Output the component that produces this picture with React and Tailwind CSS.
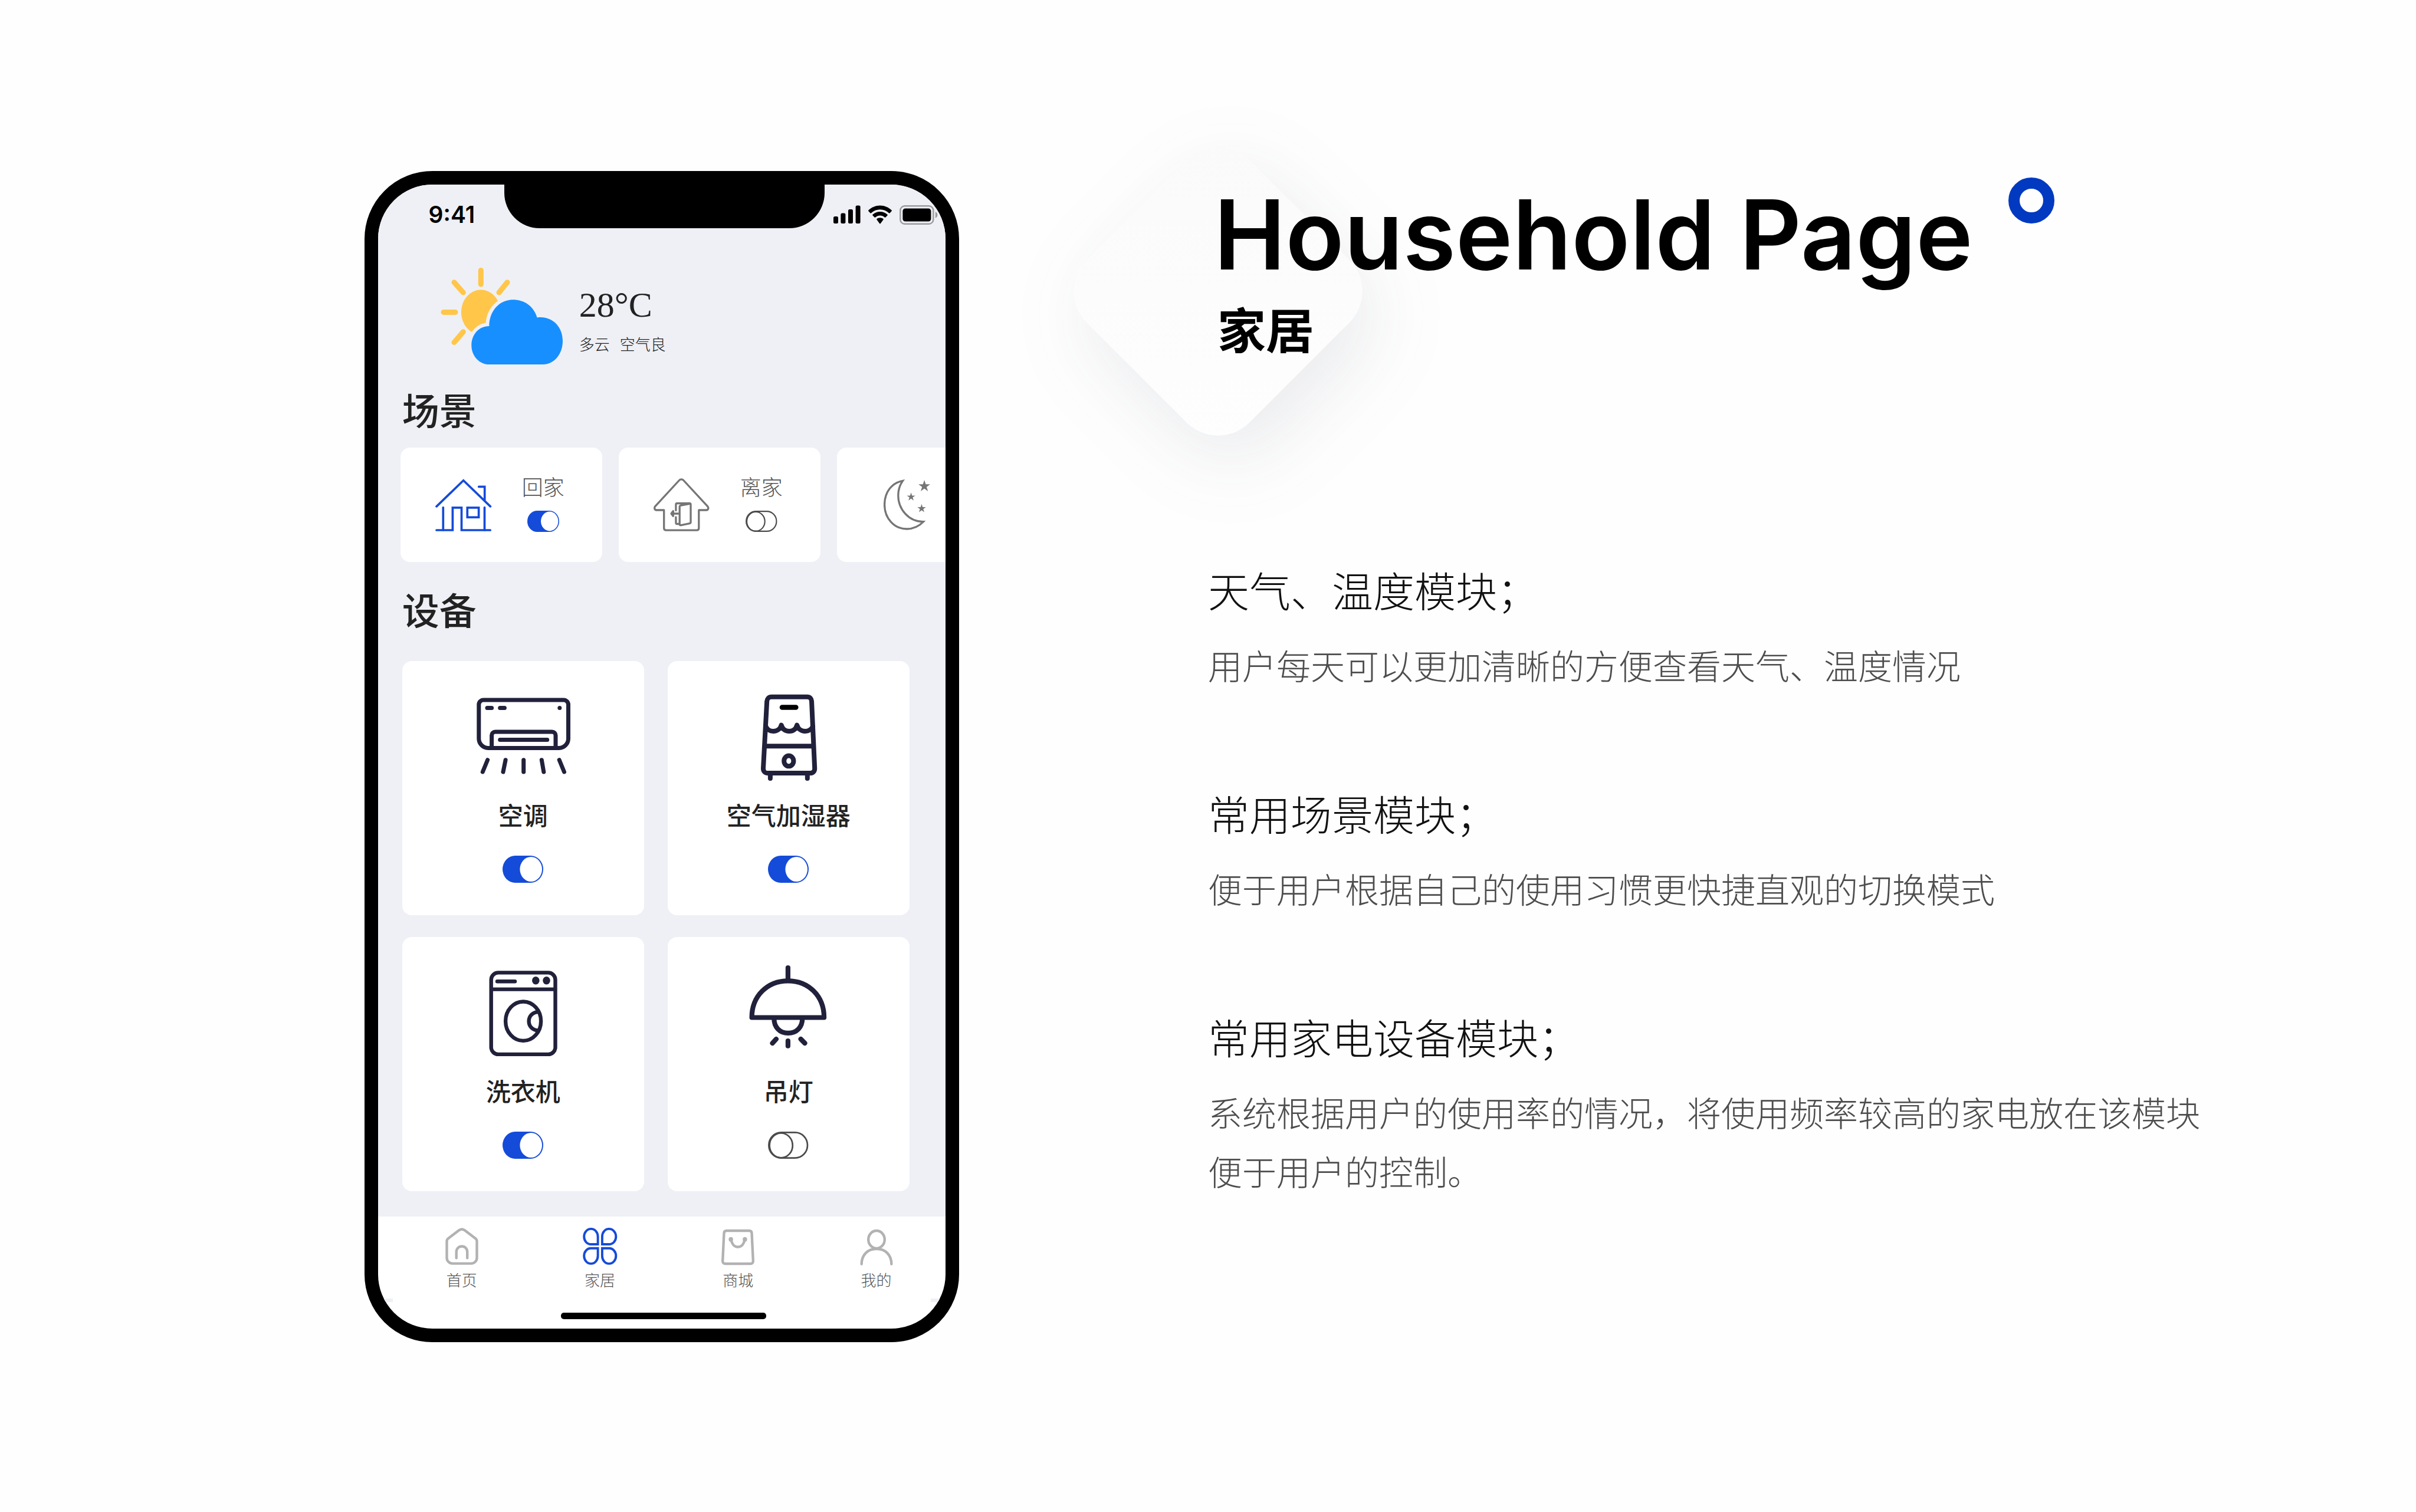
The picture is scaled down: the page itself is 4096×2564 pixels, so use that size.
import React, { useState } from "react";

const ink = "#21213b";

function Toggle({ label, initial, className }) {
  const [on, setOn] = useState(initial);
  return (
    <button
      type="button"
      role="switch"
      aria-checked={on}
      aria-label={label}
      onClick={() => setOn(!on)}
      className={className}
    >
      <svg viewBox="0 0 69 46" className="block h-full w-full" aria-hidden="true">
        {on ? (
          <>
            <rect width="69" height="46" rx="21.5" ry="23" fill="#154bd9" />
            <ellipse cx="48.2" cy="23" rx="18.8" ry="21" fill="#fff" />
          </>
        ) : (
          <g fill="none" stroke="#4b4b4b" strokeWidth="2.7">
            <rect x="1.4" y="1.4" width="65.6" height="43.2" rx="21" ry="21.6" />
            <ellipse cx="22.2" cy="23.4" rx="19.6" ry="20.9" />
          </g>
        )}
      </svg>
    </button>
  );
}

function SignalIcon() {
  return (
    <svg viewBox="0 0 46 32" className="h-[32px] w-[46px]" aria-hidden="true">
      <rect x="0" y="19" width="8" height="12" rx="2.5" />
      <rect x="12.4" y="13.5" width="8" height="17.500" rx="2.500" />
      <rect x="25" y="7" width="8" height="24" rx="2.5" />
      <rect x="37.6" y="0.4" width="8" height="30.6" rx="2.5" />
    </svg>
  );
}

function WifiIcon() {
  return (
    <svg viewBox="0 0 40 32" className="h-[32px] w-[40px]" aria-hidden="true">
      <path d="M20 .4C27.600.4 34.500 3.400 39.600 8.400 40.100 8.900 40.100 9.600 39.600 10.100L36.600 13.200C36.200 13.700 35.400 13.700 35 13.200 31 9.500 25.700 7.300 20 7.300S9 9.500 5 13.200C4.600 13.700 3.800 13.700 3.400 13.200L.4 10.100C-.1 9.600-.1 8.900.4 8.400 5.500 3.400 12.400.4 20 .4Z" />
      <path d="M20 10.900C24.800 10.900 29.100 12.700 32.400 15.700 32.900 16.200 32.900 16.900 32.400 17.400L29.400 20.400C28.900 20.900 28.200 20.900 27.700 20.500 25.700 18.700 23 17.600 20 17.600S14.300 18.700 12.300 20.500C11.800 20.900 11.100 20.900 10.600 20.400L7.600 17.400C7.100 16.900 7.100 16.200 7.600 15.700 10.900 12.700 15.200 10.900 20 10.900Z" />
      <path d="M20 21.200C22 21.200 23.900 21.900 25.400 23.100 25.900 23.600 25.900 24.300 25.400 24.800L20.800 31C20.400 31.500 19.600 31.500 19.200 31L14.600 24.800C14.100 24.300 14.100 23.600 14.600 23.100 16.100 21.900 18 21.200 20 21.200Z" />
    </svg>
  );
}

function BatteryIcon() {
  return (
    <svg viewBox="0 0 65 33" className="h-[33px] w-[65px]" aria-hidden="true">
      <rect x="1.3" y="1.3" width="56" height="30.400" rx="7.500" fill="none" stroke="#9a9b9e" strokeWidth="2.4" />
      <rect x="5.400" y="5.500" width="48" height="22" rx="4.500" />
      <path d="M60.800 11.200C63 12 64.400 14 64.400 16.500S63 21 60.800 21.800Z" fill="#9a9b9e" />
    </svg>
  );
}

function WeatherIcon() {
  return (
    <svg viewBox="0 0 207 164" className="h-[164px] w-[207px] shrink-0" aria-hidden="true">
      <g stroke="#ffc64a" strokeWidth="9" strokeLinecap="round" fill="#ffc64a">
        <ellipse cx="68.3" cy="75.400" rx="33.4" ry="38.1" stroke="none" />
        <path d="M68.3 4.500V28M5 75.400H25M23 24.700 38.300 42.100M113 24.700 99 42.100M38.300 108.700 23 126.600" />
      </g>
      <path
        d="M82.300 164C66 164 52.300 150 52.300 131.700C52.300 113 65 99 82.300 99C82.300 74 99 54.200 122.900 54.200C143 54.200 158 66 163.600 84.400C187 81 207 98 207 124C207 147 192 164 173.500 164Z"
        fill="#188fff"
        stroke="#eff0f5"
        strokeWidth="12"
        paintOrder="stroke"
      />
    </svg>
  );
}

function ArriveIcon() {
  return (
    <svg viewBox="0 0 96 89" className="h-[89px] w-[96px] shrink-0" fill="none" stroke="#154bd9" strokeWidth="3.700" strokeLinecap="round" aria-hidden="true">
      <path d="M2 46.800 47.700 2.700 93.400 46.800" />
      <path d="M73.700 13.300H83.700V36" />
      <path d="M13.300 48.500V87M83.500 48.500V87" />
      <path d="M2 87H29.400V48.900H44.500V87H93.200" />
      <rect x="54.300" y="48.900" width="19.300" height="16.300" />
    </svg>
  );
}

function LeaveIcon() {
  return (
    <svg viewBox="0 0 96 90" className="h-[90px] w-[96px] shrink-0" fill="none" stroke="#757575" strokeWidth="3.300" strokeLinecap="round" strokeLinejoin="round" aria-hidden="true">
      <path d="M43.500 3.500C45.500 1.200 48.800 1.200 50.800 3.500L91.600 47.600C94 50.500 92.500 54 89.500 54H76.800V84.500C76.800 86.800 75.300 88.200 73 88.200H21.500C19.200 88.200 17.700 86.800 17.700 84.500V54H5C1.900 54 .6 50.500 2.800 47.600Z" />
      <path d="M37.900 54.500V44.500Q37.900 42.500 39.900 42.500H61Q63 42.500 63 44.500V74.500Q63 76.300 61 76.700L46.500 79.600Q44.200 80 44.200 78V48.500Q44.200 46.500 46.200 46L61 43.400" />
      <path d="M37.900 66V75.500Q37.900 77.500 39.900 77.500H43" />
      <path d="M41.700 60H31M33.300 55.600 30 60 33.300 64.300Z" />
    </svg>
  );
}

const star = "0,-10 2.25,-3.09 9.51,-3.09 3.63,1.18 5.88,8.09 0,3.82 -5.88,8.09 -3.63,1.18 -9.51,-3.09 -2.25,-3.09";

function MoonIcon() {
  return (
    <svg viewBox="0 0 79 86" className="h-[86px] w-[79px] shrink-0" aria-hidden="true">
      <path
        d="M32.500 2.400C14.500 5.500 1.600 21 1.600 42.800C1.600 66 18 84 39.400 84C50.500 84 60 79.500 67.500 71.700C43 72 24.800 51 24.800 27C24.800 17 27.500 9.500 32.500 2.400Z"
        fill="none"
        stroke="#757575"
        strokeWidth="3.300"
      />
      <g fill="#757575">
        <polygon points={star} transform="translate(69.100 11.400) scale(1.050)" />
        <polygon points={star} transform="translate(46.600 29.700) scale(.750)" />
        <polygon points={star} transform="translate(64.500 49.300) scale(.760)" />
      </g>
    </svg>
  );
}

function DeviceCanvas({ width, children }) {
  return (
    <svg viewBox="0 0 160 156" className="h-[156px] w-[160px] shrink-0 overflow-visible" fill="none" stroke={ink} strokeWidth={width} strokeLinecap="round" strokeLinejoin="round" aria-hidden="true">
      {children}
    </svg>
  );
}

function AirConditionerIcon() {
  return (
    <DeviceCanvas width="7">
      <path d="M12.800 18H148.500A8 8 0 0 1 156.500 26V83.400A16 16 0 0 1 140.500 99.400H20.800A16 16 0 0 1 4.800 83.400V26A8 8 0 0 1 12.800 18Z" />
      <path d="M19 31.500H26.600M40.700 31.500H48.400M141.800 31.500V31.600" />
      <path d="M26.600 99V78A6 6 0 0 1 32.600 72H129A6 6 0 0 1 135 78V99M40.700 85.600H120.700" />
      <path d="M19.600 119.700 11.300 140M50.100 119.700 46 140M80.700 119.700V140M111.300 119.700 114.800 140M141.200 119.700 149.500 140" />
    </DeviceCanvas>
  );
}

function HumidifierIcon() {
  return (
    <DeviceCanvas width="8">
      <path d="M51 12.800H111.500C116 12.800 118.800 16 119 20L124.200 134C124.400 139 121 142 117 142H44.300C40 142 36.900 139 37 134L43.200 20C43.500 16 46.500 12.800 51 12.800Z" />
      <path d="M69 30.600H92.300" stroke="#000" strokeWidth="8.500" />
      <path d="M41.500 63C44 69 49 71 54 71C61 71 66 67 67.700 60.500C69.500 67 74 71 81 71C88 71 92.500 67 94.200 60.500C96 67 101 71 108 71C113 71 118 69 121 63" />
      <path d="M40 96.200H122" />
      <ellipse cx="80.300" cy="121.400" rx="8.100" ry="8.900" />
      <path d="M48.900 144V151M111.800 144V151" />
    </DeviceCanvas>
  );
}

function WasherIcon() {
  return (
    <DeviceCanvas width="6.400">
      <rect x="25.700" y="12.400" width="108.800" height="138.500" rx="12" />
      <path d="M27 40.600H133M36 27.300H66" />
      <g fill={ink} stroke="none">
        <ellipse cx="101.300" cy="25.800" rx="6.300" ry="6.700" />
        <ellipse cx="119.500" cy="25.800" rx="6.300" ry="6.700" />
      </g>
      <ellipse cx="80.100" cy="94.700" rx="30" ry="33.200" />
      <path d="M105.500 79C96 79.500 89.600 86 89.600 94.800S96 110 105.500 110.500" />
    </DeviceCanvas>
  );
}

function LampIcon() {
  return (
    <DeviceCanvas width="8.200">
      <path d="M78.900 4V24" />
      <path d="M17.600 88.500C17.600 52 44 26.300 78.900 26.300S140.100 52 140.100 88.500Z" />
      <path d="M55.300 90C55.300 105 65 114.800 79.200 114.800S103.300 105 103.300 90" />
      <path d="M78.900 128V136.700M58.900 125 52.600 132M100.600 125 107.500 132" />
    </DeviceCanvas>
  );
}

function TabCanvas({ children, color }) {
  return (
    <svg viewBox="0 0 60 64" className="h-[64px] w-[60px]" fill="none" stroke={color} strokeWidth="4.400" strokeLinecap="round" strokeLinejoin="round" aria-hidden="true">
      {children}
    </svg>
  );
}

const petal = "M26.600 28V15C26.600 7.800 21.600 1.900 15 1.900S3.200 7.800 3.200 15S8.200 28 15 28Z";

const tabs = [
  {
    label: "首页",
    icon: (
      <TabCanvas color="#b2b2b2">
        <path d="M24.800 4.500C28 2 32 2 35.200 4.500L53.500 18.500Q55.500 20 55.500 23V51A9.600 9.600 0 0 1 45.900 60.600H14.100A9.600 9.600 0 0 1 4.500 51V23Q4.500 20 6.500 18.500Z" />
        <path d="M20.700 51.300V41C20.700 35.500 24.500 31.500 30 31.500S39.200 35.500 39.200 41V51.300" />
      </TabCanvas>
    ),
  },
  {
    label: "家居",
    current: true,
    icon: (
      <TabCanvas color="#154bd9">
        <g strokeWidth="3.900" strokeLinejoin="miter">
          <path d={petal} />
          <path d={petal} transform="translate(60.500 0) scale(-1 1)" />
          <path d={petal} transform="translate(0 62.800) scale(1 -1)" />
          <path d={petal} transform="translate(60.500 62.800) scale(-1 -1)" />
        </g>
      </TabCanvas>
    ),
  },
  {
    label: "商城",
    icon: (
      <TabCanvas color="#b2b2b2">
        <path d="M11 5H49Q53.300 5 53.500 9L55.800 56Q56 61 51 61H9Q4 61 4.200 56L6.500 9Q6.700 5 11 5Z" />
        <path d="M18.500 19.500C19.500 27 23.500 32.500 30 32.500S40.500 27 41.500 19.500" />
        <path d="M18.100 19.500V20M41.900 19.500V20" strokeWidth="7.400" />
      </TabCanvas>
    ),
  },
  {
    label: "我的",
    icon: (
      <TabCanvas color="#b2b2b2">
        <ellipse cx="30" cy="20" rx="13.800" ry="15" />
        <path d="M4.700 61.500C4.700 46 15 35.800 30 35.800S55.300 46 55.300 61.500" />
      </TabCanvas>
    ),
  },
];

const scenes = [
  { label: "回家", icon: <ArriveIcon />, on: true },
  { label: "离家", icon: <LeaveIcon />, on: false },
];

const devices = [
  { label: "空调", icon: <AirConditionerIcon />, on: true },
  { label: "空气加湿器", icon: <HumidifierIcon />, on: true },
  { label: "洗衣机", icon: <WasherIcon />, on: true },
  { label: "吊灯", icon: <LampIcon />, on: false },
];

const notes = [
  { title: "天气、温度模块；", lines: ["用户每天可以更加清晰的方便查看天气、温度情况"] },
  { title: "常用场景模块；", lines: ["便于用户根据自己的使用习惯更快捷直观的切换模式"] },
  {
    title: "常用家电设备模块；",
    lines: ["系统根据用户的使用率的情况，将使用频率较高的家电放在该模块", "便于用户的控制。"],
  },
];

function StatusBar() {
  return (
    <div className="flex h-[102px] items-center">
      <div className="flex flex-1 justify-end pr-[50px] font-['Inter',sans-serif] text-[39px] leading-[40px] font-semibold text-black">9:41</div>
      <div className="h-[74px] w-[56.4%] self-start rounded-b-[60px] bg-black" />
      <div className="flex w-[21.3%] items-center gap-[13px] pl-[15px]">
        <SignalIcon />
        <WifiIcon />
        <BatteryIcon />
      </div>
    </div>
  );
}

function Phone() {
  return (
    <section className="w-[28.98%] shrink-0 self-start overflow-hidden rounded-[115px] border-[23px] border-black bg-white">
      <div className="bg-[#eff0f5] pb-[43px]">
        <StatusBar />
        <div className="flex items-start pt-[39px] pl-[106px]">
          <WeatherIcon />
          <div className="pt-[28px] pl-[28px]">
            <p className="font-['Liberation_Serif',serif] text-[60px] leading-[70px] text-[#222]">28°C</p>
            <p className="flex gap-[17px] pt-[18px] text-[26px] leading-[26px] font-light text-[#222]">
              <span>多云</span>
              <span>空气良</span>
            </p>
          </div>
        </div>

        <h3 className="mt-[43px] pl-[41px] text-[63px] leading-[64px] font-medium text-[#222]">场景</h3>
        <ul className="mt-[34px] flex gap-[28px] overflow-hidden pl-[38px]">
          {scenes.map((s) => (
            <li key={s.label} className="flex h-[194px] w-[342px] shrink-0 items-center gap-[51px] rounded-[16px] bg-white pl-[59px]">
              {s.icon}
              <div className="flex flex-col items-center gap-[24px] pb-[4px]">
                <span className="text-[36px] leading-[36px] font-light text-[#555]">{s.label}</span>
                <Toggle label={s.label} initial={s.on} className="h-[36px] w-[54px]" />
              </div>
            </li>
          ))}
          <li className="flex h-[194px] w-[342px] shrink-0 items-center rounded-[16px] bg-white pl-[79px]">
            <MoonIcon />
          </li>
        </ul>

        <h3 className="mt-[47px] pl-[41px] text-[63px] leading-[64px] font-medium text-[#222]">设备</h3>
        <ul className="mt-[57px] grid grid-cols-2 gap-x-[40px] gap-y-[37px] pr-[61px] pl-[41px]">
          {devices.map((d) => (
            <li key={d.label} className="flex flex-col items-center rounded-[16px] bg-white pt-[48px] pb-[55px]">
              {d.icon}
              <span className="mt-[35px] text-[42px] leading-[42px] font-medium text-[#222]">{d.label}</span>
              <Toggle label={d.label} initial={d.on} className="mt-[49px] h-[46px] w-[69px]" />
            </li>
          ))}
        </ul>
      </div>

      <nav className="grid grid-cols-4 pt-[19px] pb-[19px] pl-[25px]">
        {tabs.map((t) => (
          <a key={t.label} href="#" aria-current={t.current ? "page" : undefined} className="flex flex-col items-center gap-[11px]">
            {t.icon}
            <span className="text-[26px] leading-[26px] font-light text-[#555]">{t.label}</span>
          </a>
        ))}
      </nav>
      <div className="bg-[#eff0f5] px-[25px]">
        <div className="h-[6px] bg-white" />
      </div>
      <div className="flex justify-center pt-[18px] pb-[16px] pl-[7px]">
        <div className="h-[11px] w-[36.5%] rounded-[5px] bg-black" />
      </div>
    </section>
  );
}

function Diamond() {
  return (
    <div className="pointer-events-none absolute top-[9px] left-[-178px] h-[390px] w-[390px] drop-shadow-[22px_40px_64px_rgba(70,80,100,0.11)]">
      <div className="h-full w-full rotate-45 rounded-[75px] bg-linear-to-br from-[#fafafa] to-[#fefefe]" />
    </div>
  );
}

export default function App() {
  return (
    <main lang="zh-CN" className="flex min-h-screen bg-[#fefefe] pt-[290px] pb-[280px] pl-[15.08%] font-['Noto_Sans_CJK_SC',sans-serif]">
      <Phone />
      <section className="relative ml-auto w-[58.88%] pt-[11px]">
        <Diamond />
        <header className="relative">
          <div className="flex items-start gap-[60px] pl-[10px]">
            <h1 className="mt-[17px] font-['Inter',sans-serif] text-[163px] leading-[160px] font-semibold whitespace-nowrap text-black">Household Page</h1>
            <div className="h-[78px] w-[78px] shrink-0 rounded-full border-[19px] border-[#0139c0]" />
          </div>
          <h2 className="mt-[37px] pl-[16px] text-[82px] leading-[82px] font-bold text-black">家居</h2>
        </header>
        <div className="relative mt-[363px] flex flex-col gap-[162px]">
          {notes.map((n) => (
            <article key={n.title}>
              <h3 className="text-[70px] leading-[80px] font-light text-[#111]">{n.title}</h3>
              <div className="mt-[37px]">
                {n.lines.map((line) => (
                  <p key={line} className="text-[58px] leading-[100px] font-light text-[#4d4d4d]">{line}</p>
                ))}
              </div>
            </article>
          ))}
        </div>
      </section>
    </main>
  );
}
